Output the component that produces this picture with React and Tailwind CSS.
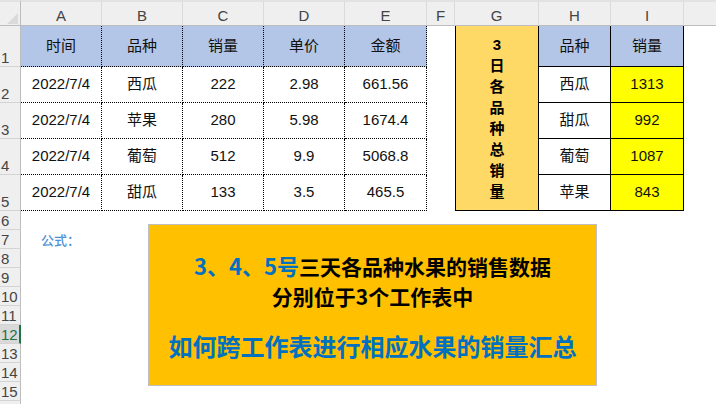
import React from "react";

const FONT = { fontFamily: '"Liberation Sans", "Noto Sans CJK SC", sans-serif' };
const CJK = { fontFamily: '"Noto Sans CJK SC", "Liberation Sans", sans-serif' };

const letters = ["A", "B", "C", "D", "E", "F", "G", "H", "I"];

const t1 = [
  ["时间", "品种", "销量", "单价", "金额"],
  ["2022/7/4", "西瓜", "222", "2.98", "661.56"],
  ["2022/7/4", "苹果", "280", "5.98", "1674.4"],
  ["2022/7/4", "葡萄", "512", "9.9", "5068.8"],
  ["2022/7/4", "甜瓜", "133", "3.5", "465.5"],
];

const t2 = [
  ["品种", "销量"],
  ["西瓜", "1313"],
  ["甜瓜", "992"],
  ["葡萄", "1087"],
  ["苹果", "843"],
];

function RowHead({ n }) {
  const sel = n === 12;
  return (
    <div
      className={
        "flex items-end pl-px leading-[17px] text-[15px] border-b border-[#d4d4d4] " +
        (sel
          ? "bg-[#d9d9d9] text-[#217346] border-r-2 border-r-[#217346]"
          : "bg-[#efefef] text-[#444] border-r border-r-[#bdbdbd]")
      }
    >
      {n <= 15 ? n : ""}
    </div>
  );
}

export default function App() {
  const cells = [];
  cells.push(
    <div key="corner" className="relative bg-[#efefef] border-t-2 border-t-[#e2e2e2] border-b border-b-[#bdbdbd] border-r border-r-[#bdbdbd]">
      <svg className="absolute left-[7px] top-[11px]" width="11" height="11" viewBox="0 0 11 11">
        <polygon points="11,0 11,11 0,11" fill="#dadada" />
      </svg>
    </div>
  );
  letters.forEach((l) =>
    cells.push(
      <div
        key={"h" + l}
        className="flex items-center justify-center pt-[6px] text-[15px] text-[#444] bg-[#efefef] border-t-2 border-t-[#e2e2e2] border-b border-b-[#bdbdbd] border-r border-r-[#dadada]"
      >
        {l}
      </div>
    )
  );
  cells.push(
    <div key="hrest" className="bg-[#efefef] border-t-2 border-t-[#e2e2e2] border-b border-b-[#bdbdbd]" />
  );

  for (let r = 1; r <= 16; r++) {
    cells.push(<RowHead key={"rh" + r} n={r} />);
    if (r <= 5) {
      const row = t1[r - 1];
      row.forEach((v, i) =>
        cells.push(
          <div
            key={"t1" + r + i}
            className={
              "flex items-center justify-center text-[15px] text-[#111] border-r border-b border-dotted border-black " +
              (r === 1 ? "bg-[#b4c6e7]" : "bg-white")
            }
          >
            {v}
          </div>
        )
      );
      cells.push(<div key={"f" + r} />);
      if (r === 1) {
        cells.push(
          <div
            key="g"
            className="row-span-5 flex flex-col items-center justify-center bg-[#ffd966] border-l border-r border-b border-black font-bold text-[15px] leading-[21px] text-black"
          >
            {"3日各品种总销量".split("").map((c, i) => (
              <span key={i}>{c}</span>
            ))}
          </div>
        );
      }
      const r2 = t2[r - 1];
      cells.push(
        <div
          key={"h2" + r}
          className={
            "flex items-center justify-center text-[15px] text-[#111] border-r border-b border-black " +
            (r === 1 ? "bg-[#b4c6e7]" : "bg-white")
          }
        >
          {r2[0]}
        </div>
      );
      cells.push(
        <div
          key={"i2" + r}
          className={
            "flex items-center justify-center text-[15px] text-[#111] border-r border-b border-black " +
            (r === 1 ? "bg-[#b4c6e7]" : "bg-[#ffff00]")
          }
        >
          {r2[1]}
        </div>
      );
      cells.push(<div key={"rest" + r} />);
    } else {
      if (r === 7) {
        cells.push(
          <div key="formula" className="col-span-10 flex items-center pl-5 text-[13px] font-medium text-[#4f93d6]" style={CJK}>
            公式：
          </div>
        );
      } else {
        cells.push(<div key={"e" + r} className="col-span-10" />);
      }
    }
  }

  return (
    <div className="relative w-[716px] h-[404px] overflow-hidden bg-white" style={FONT}>
      <div className="grid grid-cols-[21px_81px_81px_81px_81px_82px_28px_84px_72px_73px_1fr] grid-rows-[26px_41px_36px_36px_36px_36px_19px_19px_19px_19px_19px_19px_19px_19px_19px_19px_19px]">
        {cells}
      </div>
      <div
        className="absolute left-[148px] top-[224px] w-[449px] h-[162px] bg-[#ffc000] border border-[#bfbfbf] flex flex-col items-center pt-[27px] font-bold"
        style={CJK}
      >
        <div className="leading-[26px] text-[21px] text-black whitespace-nowrap">
          <span className="text-[22px] text-[#0070c0]">3、4、5号</span>三天各品种水果的销售数据
        </div>
        <div className="mt-1 leading-[26px] text-[21px] text-black whitespace-nowrap">分别位于3个工作表中</div>
        <div className="mt-[22px] leading-[30px] text-[24px] text-[#0070c0] whitespace-nowrap">
          如何跨工作表进行相应水果的销量汇总
        </div>
      </div>
    </div>
  );
}
